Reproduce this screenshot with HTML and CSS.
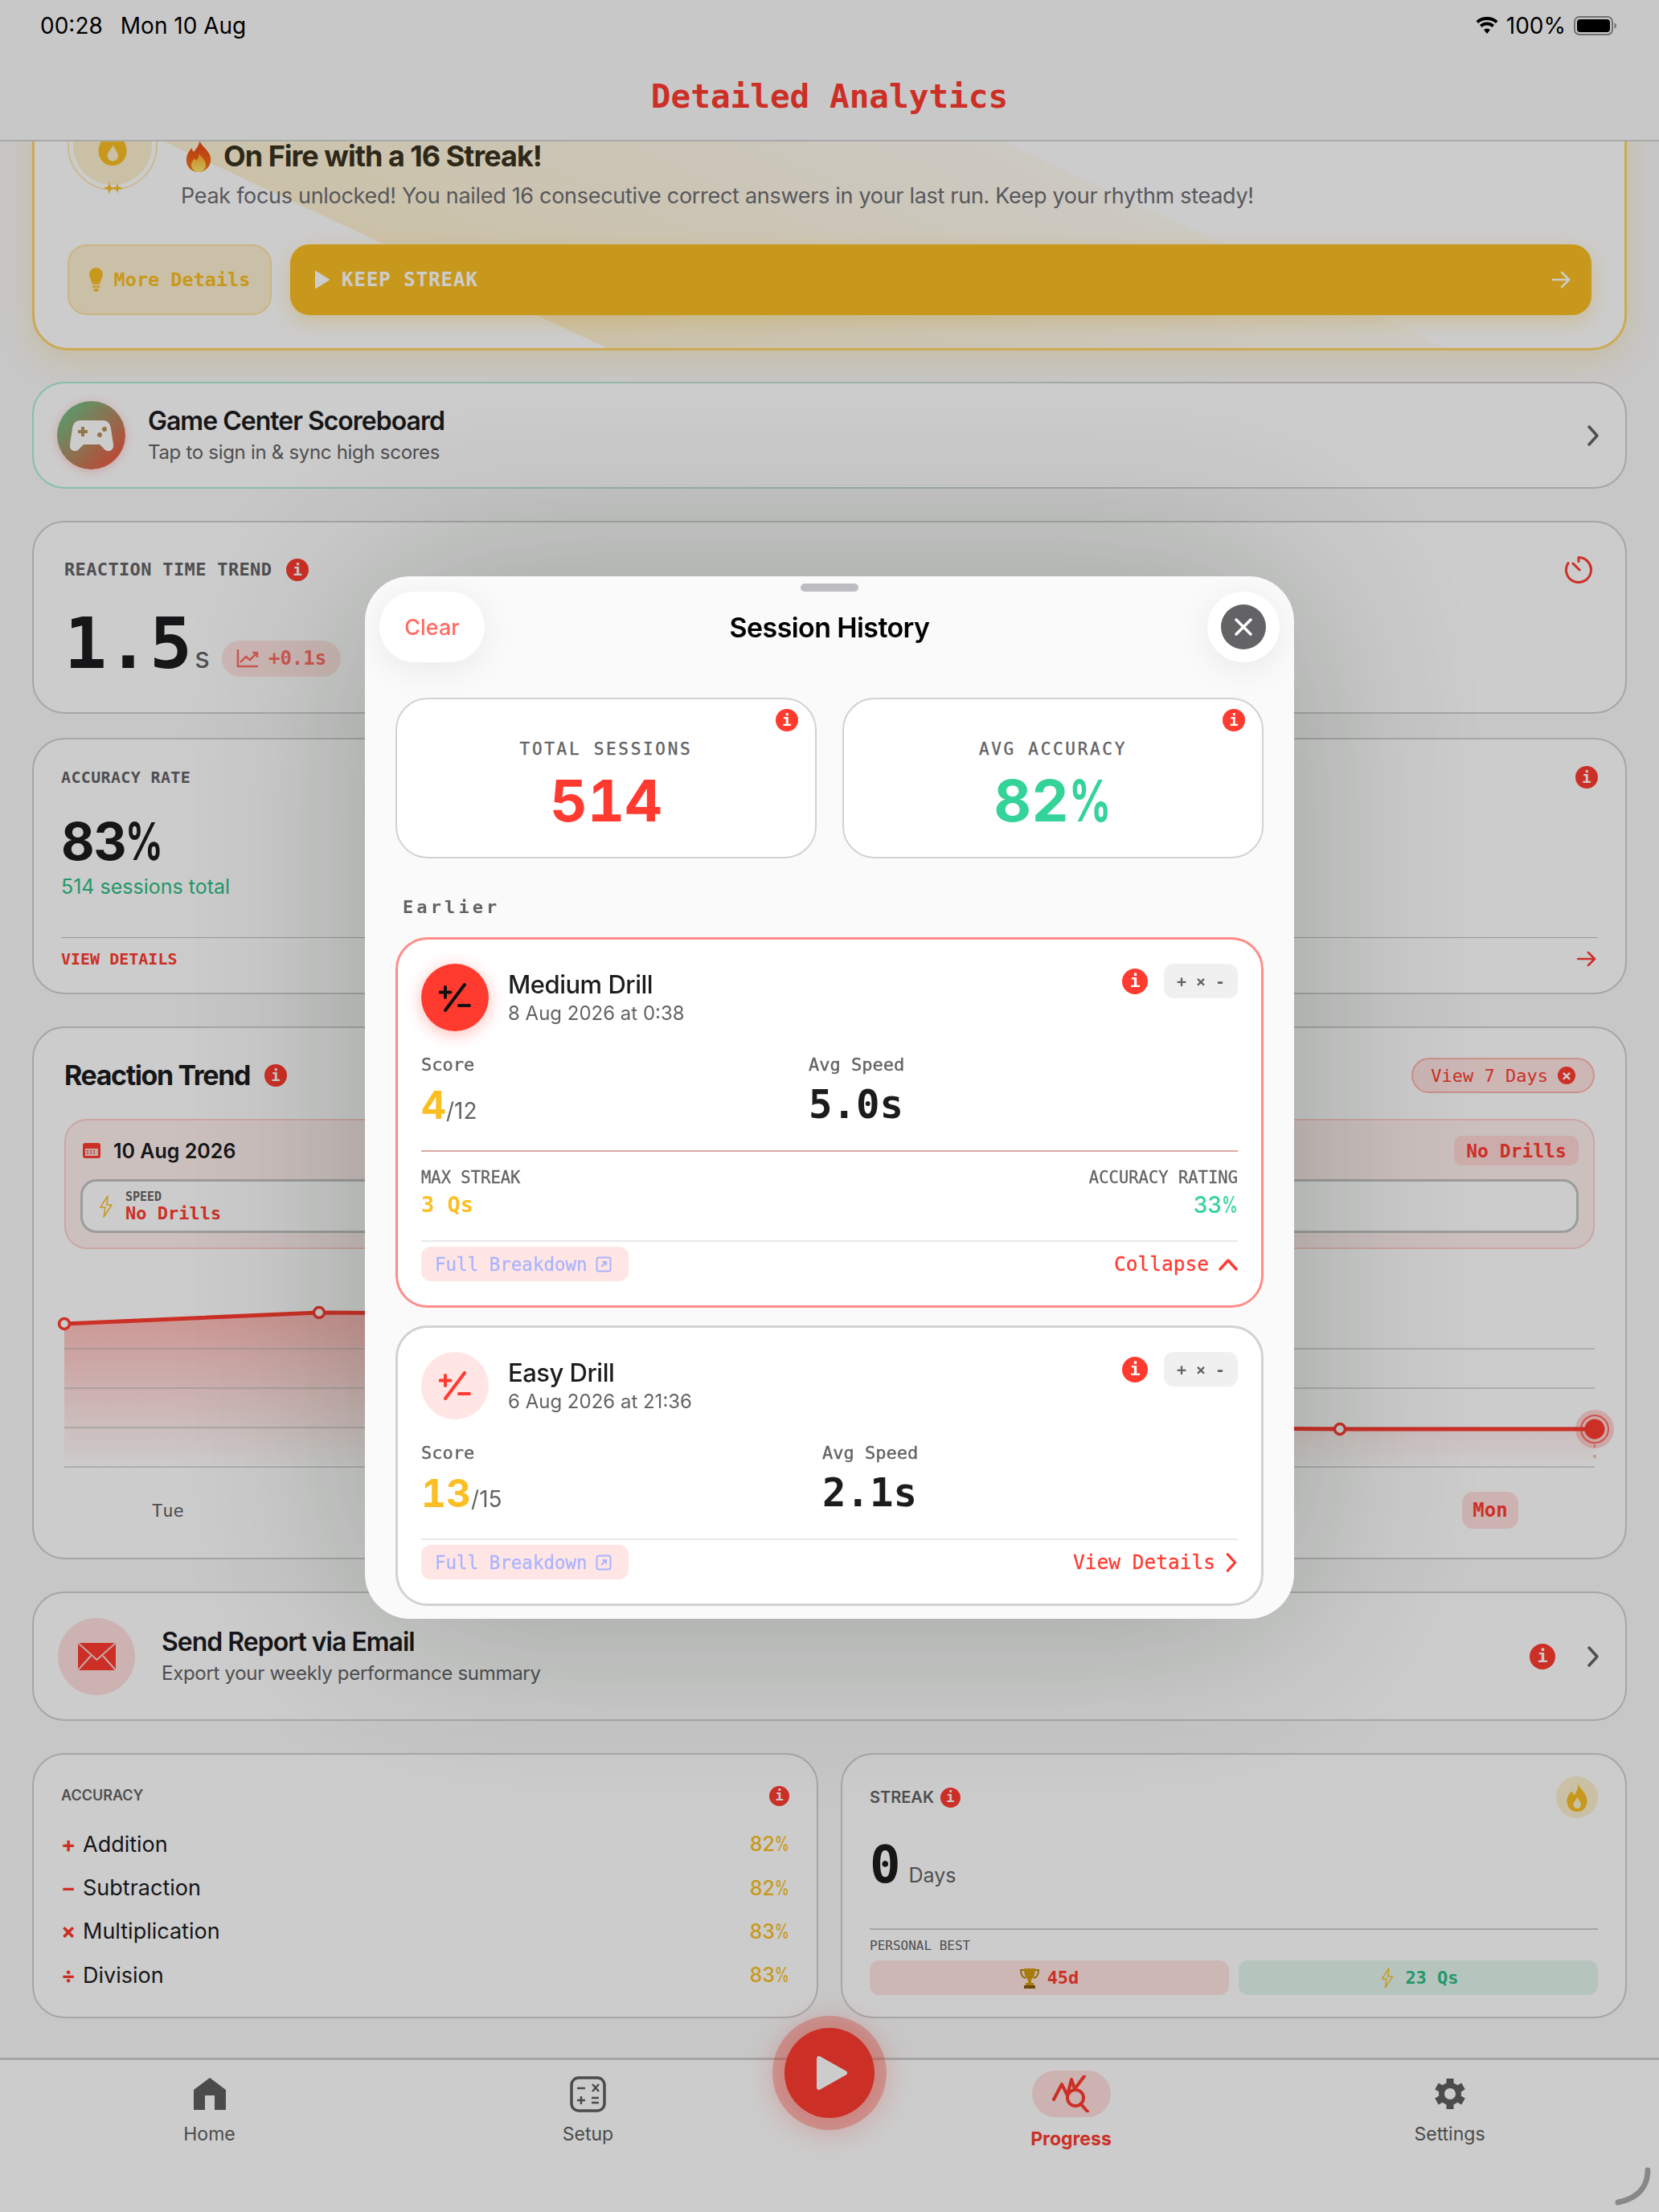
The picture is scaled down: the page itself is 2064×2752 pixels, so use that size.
FILE: index.html
```html
<!DOCTYPE html>
<html lang="en">
<head>
    <meta charset="UTF-8">
    <meta name="viewport" content="width=device-width, initial-scale=1.0">
    <title>Detailed Analytics</title>
    <link rel="stylesheet" href="styles.css">
</head>
<body>
    <svg class="sprite" width="0" height="0" aria-hidden="true">
        <defs>
            <symbol id="flame" viewBox="0 0 24 28">
                <path fill-rule="evenodd" d="M13 0c1 5 9 9 9 17.500C22 23.500 17.500 28 12 28S2 23.500 2 17.500C2 13 4.500 10.500 6 7.500c1.500 1 2.500 2.500 3 4C11.500 8.500 13.500 5 13 0zM12.500 13c-.5 3-4 4.500-4 8 0 2.200 1.600 3.800 3.700 3.800S16 23.200 16 21c0-3-3-4.500-3.500-8z"/>
            </symbol>
            <symbol id="plus-minus" viewBox="0 0 40 36">
                <path fill="none" stroke="currentColor" stroke-width="4" stroke-linecap="round" d="M32 2 8 34M8 5v13M1.500 11.500h13M25 28h13"/>
            </symbol>
            <symbol id="open-box" viewBox="0 0 20 20">
                <path fill="none" stroke="currentColor" stroke-width="2" d="M4 1.500h12A2.500 2.500 0 0 1 18.500 4v12a2.500 2.500 0 0 1-2.500 2.500H4A2.500 2.500 0 0 1 1.500 16V4A2.500 2.500 0 0 1 4 1.500zM7 13l6-6M8.500 7H13v4.500"/>
            </symbol>
            <symbol id="chevron" viewBox="0 0 16 28">
                <path fill="none" stroke="currentColor" stroke-width="3.500" stroke-linecap="round" stroke-linejoin="round" d="M3 3l10 11L3 25"/>
            </symbol>
            <symbol id="bolt" viewBox="0 0 18 28">
                <path fill="none" stroke="currentColor" stroke-width="1.500" stroke-linejoin="round" d="M11 1 2 15h6L6 27l10-15h-6z"/>
            </symbol>
        </defs>
    </svg>

    <div class="app">
        <header class="top-bar">
            <div class="status-bar">
                <div class="status-left"><span>00:28</span><span>Mon 10 Aug</span></div>
                <div class="status-right">
                    <svg class="wifi" viewBox="0 0 28 22"><path d="M14 21l-4-5a6 6 0 0 1 8 0zM7.500 13 5 10a13.500 13.500 0 0 1 18 0l-2.500 3a10 10 0 0 0-13 0zM3 8 .5 5a20.500 20.500 0 0 1 27 0L25 8A17 17 0 0 0 3 8z"/></svg>
                    <span>100%</span>
                    <svg class="battery" viewBox="0 0 54 24"><rect x="1" y="1" width="47" height="22" rx="6" fill="none" stroke="#8e8e8e" stroke-width="2"/><rect x="4" y="4" width="41" height="16" rx="4"/><path d="M50.500 8.500c2 .5 2.500 2 2.500 3.500s-.5 3-2.500 3.500z" fill="#8e8e8e"/></svg>
                </div>
            </div>
            <h1 class="page-title">Detailed Analytics</h1>
        </header>

        <main class="scroll-area">
            <section class="hero-card">
                <div class="hero-top">
                    <div class="medal">
                        <svg class="medal-flame"><use href="#flame"/></svg>
                        <svg class="medal-stars" viewBox="0 0 26 16"><path d="M8 0l1.500 6L15 8l-5.500 2L8 16l-1.500-6L1 8l5.500-2zM18 1l1.300 5.300L25 8l-5.700 1.700L18 15l-1.300-5.300L11 8l5.700-1.700z"/></svg>
                    </div>
                    <div class="hero-text">
                        <h2 class="hero-title">
                            <svg class="fire-emoji" viewBox="0 0 34 40">
                                <defs>
                                    <linearGradient id="fireOuter" x1="0" y1="0" x2="0" y2="1"><stop offset="0" stop-color="#e8401c"/><stop offset="1" stop-color="#f57c12"/></linearGradient>
                                    <linearGradient id="fireInner" x1="0" y1="0" x2="0" y2="1"><stop offset="0" stop-color="#ffa51e"/><stop offset="1" stop-color="#ffe873"/></linearGradient>
                                </defs>
                                <path fill="url(#fireOuter)" d="M18 0c1 7 12 12 14 22 1.500 10-6 18-15 18S1 33 2 23c.500-6 4-9 6-13 1 2 2 4 3 5 3-4 8-9 7-15z"/>
                                <path fill="url(#fireInner)" d="M18 16c0 4 8 8 8 15 0 5-4 9-9 9s-9-4-9-9c0-4 3-6 4-8 1 1 2 2 2 3 2-2 4-6 4-10z"/>
                            </svg>
                            <span>On Fire with a 16 Streak!</span>
                        </h2>
                        <p class="hero-desc">Peak focus unlocked! You nailed 16 consecutive correct answers in your last run. Keep your rhythm steady!</p>
                    </div>
                </div>
                <div class="hero-actions">
                    <button class="btn-details">
                        <svg class="bulb" viewBox="0 0 18 32"><path d="M9 0a9 9 0 0 1 9 9c0 4-3 7-4 13H4C3 16 0 13 0 9a9 9 0 0 1 9-9zM4 24h10v2.500H4zM5.500 28h7v1.500L10.500 32h-3l-2-2.500z"/></svg>
                        More Details
                    </button>
                    <button class="btn-keep">
                        <svg class="btn-play" viewBox="0 0 20 24"><path d="M2 2l16 10L2 22z" stroke="currentColor" stroke-width="2" stroke-linejoin="round"/></svg>
                        <span class="btn-keep-label">KEEP STREAK</span>
                        <svg class="btn-arrow" viewBox="0 0 24 24"><path d="M2 12h19M13 3l9 9-9 9" fill="none" stroke="currentColor" stroke-width="2.500" stroke-linecap="round" stroke-linejoin="round"/></svg>
                    </button>
                </div>
            </section>

            <section class="link-card game-card">
                <div class="game-icon">
                    <svg viewBox="0 0 56 44"><path fill="#fff" d="M14 3h28c6 0 9 4 10 10l3 20c1 7-6 11-11 6l-6-6H18l-6 6c-5 5-12 1-11-6l3-20C5 7 8 3 14 3z"/><path fill="none" stroke="#b8945c" stroke-width="4" d="M17 11v12M11 17h12"/><circle cx="38" cy="21" r="3" fill="#b8945c"/><circle cx="44" cy="14" r="3" fill="#b8945c"/></svg>
                </div>
                <div class="link-text">
                    <div class="link-title">Game Center Scoreboard</div>
                    <div class="link-sub">Tap to sign in &amp; sync high scores</div>
                </div>
                <svg class="chevron"><use href="#chevron"/></svg>
            </section>

            <div class="metric-stack">
                <section class="card reaction-card">
                    <div class="card-row">
                        <div class="label-with-info">
                            <span class="mono-label">REACTION TIME TREND</span>
                            <span class="info">i</span>
                        </div>
                        <svg class="timer" viewBox="0 0 36 36"><path fill="none" stroke="currentColor" stroke-width="3" stroke-linecap="round" d="M18 2.500A15.500 15.500 0 1 1 5 9.500M18 2.500v5M11 10l8 8"/></svg>
                    </div>
                    <div class="reaction-value">
                        <span class="big-number">1.5</span>
                        <span class="big-unit">s</span>
                        <span class="trend-pill">
                            <svg viewBox="0 0 28 24"><path fill="none" stroke="currentColor" stroke-width="2.500" d="M2 1v21h25M5 17l7-7 5 4 8-8M20 5h6v6"/></svg>
                            +0.1s
                        </span>
                    </div>
                </section>

                <section class="card accuracy-card">
                    <div class="card-row">
                        <span class="mono-label mono-label-small">ACCURACY RATE</span>
                        <span class="info">i</span>
                    </div>
                    <div class="accuracy-value">83<span class="pct">%</span></div>
                    <div class="accuracy-sub">514 sessions total</div>
                    <div class="accuracy-footer">
                        <span>VIEW DETAILS</span>
                        <svg viewBox="0 0 24 20"><path d="M1 10h21M14 2l8 8-8 8" fill="none" stroke="currentColor" stroke-width="2.500" stroke-linecap="round" stroke-linejoin="round"/></svg>
                    </div>
                </section>
            </div>

            <section class="card trend-card">
                <div class="card-row">
                    <div class="label-with-info">
                        <h2 class="trend-title">Reaction Trend</h2>
                        <span class="info">i</span>
                    </div>
                    <span class="days-pill">View 7 Days <span class="pill-x">×</span></span>
                </div>
                <div class="day-panel">
                    <div class="day-row">
                        <div class="day-date">
                            <svg viewBox="0 0 22 19"><rect width="22" height="19" rx="3"/><path d="M3 7h16v9H3z" fill="#f3d6d4"/><path d="M5 9h2v1.500H5zM9 9h2v1.500H9zM13 9h2v1.500h-2zM5 12h2v1.500H5zM9 12h2v1.500H9zM13 12h2v1.500h-2z"/></svg>
                            <span>10 Aug 2026</span>
                        </div>
                        <span class="no-drills-chip">No Drills</span>
                    </div>
                    <div class="day-box">
                        <svg class="bolt-icon"><use href="#bolt"/></svg>
                        <div>
                            <div class="day-box-label">SPEED</div>
                            <div class="day-box-value">No Drills</div>
                        </div>
                    </div>
                </div>
                <svg class="trend-chart" viewBox="0 0 1904 205" width="1904" height="205">
                    <defs>
                        <linearGradient id="areaFill" gradientUnits="userSpaceOnUse" x1="0" y1="0" x2="0" y2="200">
                            <stop offset="0" stop-color="#ff3b30" stop-opacity=".36"/>
                            <stop offset="1" stop-color="#ff3b30" stop-opacity="0"/>
                        </linearGradient>
                    </defs>
                    <path d="M0 22 317 8 635 10 952 90 1269 150 1587 153 1904 153V200H0z" fill="url(#areaFill)"/>
                    <path d="M0 53h1904M0 102h1904M0 151h1904M0 200h1904" stroke="#b4b4b4" stroke-width="1"/>
                    <path d="M1904 172v20" stroke="#ff3b30" stroke-opacity=".4" stroke-width="3" stroke-dasharray="4 9"/>
                    <path d="M0 22 317 8 635 10 952 90 1269 150 1587 153 1904 153" fill="none" stroke="#ff3b30" stroke-width="5"/>
                    <g fill="#fff" stroke="#ff3b30" stroke-width="3.500">
                        <circle cx="0" cy="22" r="6.500"/><circle cx="317" cy="8" r="6.500"/><circle cx="635" cy="10" r="6.500"/>
                        <circle cx="952" cy="90" r="6.500"/><circle cx="1269" cy="150" r="6.500"/><circle cx="1587" cy="153" r="6.500"/>
                    </g>
                    <circle cx="1904" cy="153" r="24" fill="#ff3b30" fill-opacity=".22"/>
                    <circle cx="1904" cy="153" r="17" fill="none" stroke="#ff3b30" stroke-opacity=".7" stroke-width="2"/>
                    <circle cx="1904" cy="153" r="12.500" fill="#ff3b30"/>
                </svg>
                <div class="chart-days">
                    <span>Tue</span><span class="day-today">Mon</span>
                </div>
            </section>

            <section class="link-card email-card">
                <div class="email-icon">
                    <svg viewBox="0 0 47 34"><rect width="47" height="34" fill="#ff3b30"/><path d="M0 0l23.500 21L47 0M0 34l16-18M47 34 31 16" fill="none" stroke="#f6d8d6" stroke-width="2"/></svg>
                </div>
                <div class="link-text">
                    <div class="link-title">Send Report via Email</div>
                    <div class="link-sub">Export your weekly performance summary</div>
                </div>
                <span class="info info-large">i</span>
                <svg class="chevron email-chevron"><use href="#chevron"/></svg>
            </section>

            <div class="bottom-grid">
                <section class="card breakdown-card">
                    <div class="card-row">
                        <span class="small-head small-head-narrow">ACCURACY</span>
                        <span class="info info-small">i</span>
                    </div>
                    <ul class="op-list">
                        <li><span class="op-symbol">+</span><span class="op-name">Addition</span><span class="op-value">82<span class="pct">%</span></span></li>
                        <li><span class="op-symbol">−</span><span class="op-name">Subtraction</span><span class="op-value">82<span class="pct">%</span></span></li>
                        <li><span class="op-symbol">×</span><span class="op-name">Multiplication</span><span class="op-value">83<span class="pct">%</span></span></li>
                        <li><span class="op-symbol">÷</span><span class="op-name">Division</span><span class="op-value">83<span class="pct">%</span></span></li>
                    </ul>
                </section>

                <section class="card streak-card">
                    <div class="card-row">
                        <div class="label-with-info streak-label">
                            <span class="small-head">STREAK</span>
                            <span class="info info-small">i</span>
                        </div>
                        <div class="streak-flame"><svg><use href="#flame"/></svg></div>
                    </div>
                    <div class="streak-value"><span class="streak-number">0</span><span class="streak-unit">Days</span></div>
                    <div class="personal-best">PERSONAL BEST</div>
                    <div class="best-row">
                        <div class="best-pill best-days">
                            <svg viewBox="0 0 24 26"><path fill="none" stroke="#b8860b" stroke-width="2" d="M6 3H1c0 6 2 9 6 10M18 3h5c0 6-2 9-6 10"/><path fill="#d29a12" d="M5 1h14c0 8-2 12-5 14v4h3v3H7v-3h3v-4C7 13 5 9 5 1z"/><path fill="#8a5a10" d="M5 22h14v4H5z"/></svg>
                            45d
                        </div>
                        <div class="best-pill best-speed">
                            <svg class="best-bolt"><use href="#bolt"/></svg>
                            23 Qs
                        </div>
                    </div>
                </section>
            </div>
        </main>

        <nav class="tab-bar">
            <div class="tab">
                <div class="tab-icon"><svg class="home-icon" viewBox="0 0 40 40"><path d="M20 0 40 15V40H26V22H14V40H0V15z"/></svg></div>
                <span class="tab-label">Home</span>
            </div>
            <div class="tab">
                <div class="tab-icon">
                    <svg class="setup-icon" viewBox="0 0 45 45"><rect x="2" y="2" width="41" height="41" rx="9" fill="none" stroke="currentColor" stroke-width="3.500"/><path d="M9 15h10M28 10l8 9M36 10l-8 9M9 30h10M14 25v10M27 27h9M27 33h9" fill="none" stroke="currentColor" stroke-width="2.500"/></svg>
                </div>
                <span class="tab-label">Setup</span>
            </div>
            <button class="play-button">
                <svg viewBox="0 0 40 44"><path d="M4 4l32 18L4 40z" fill="#fff" stroke="#fff" stroke-width="6" stroke-linejoin="round"/></svg>
            </button>
            <div class="tab tab-active">
                <div class="tab-icon">
                    <svg class="progress-icon" viewBox="0 0 47 46"><path d="M2 30 12 11l7 14 5-20 4 12L40 1" fill="none" stroke="currentColor" stroke-width="4" stroke-linejoin="round" stroke-linecap="round"/><circle cx="29" cy="28" r="10" fill="none" stroke="currentColor" stroke-width="4"/><path d="M36 36l8 9" stroke="currentColor" stroke-width="4" stroke-linecap="round"/></svg>
                </div>
                <span class="tab-label">Progress</span>
            </div>
            <div class="tab">
                <div class="tab-icon">
                    <svg class="gear-icon" viewBox="0 0 40 40"><g stroke="currentColor" stroke-width="9"><path d="M20 1v38M3.500 10.500l33 19M3.500 29.500l33-19"/></g><circle cx="20" cy="20" r="14" fill="currentColor"/><circle cx="20" cy="20" r="7" fill="#fff"/></svg>
                </div>
                <span class="tab-label">Settings</span>
            </div>
            <svg class="corner-grip" viewBox="0 0 46 48"><path d="M42 4c0 16-8 34-37 40" fill="none" stroke="#aaa" stroke-width="7" stroke-linecap="round"/></svg>
        </nav>
    </div>

    <div class="overlay">
        <div class="sheet">
            <div class="sheet-handle"></div>
            <div class="sheet-header">
                <button class="clear-button">Clear</button>
                <h2 class="sheet-title">Session History</h2>
                <button class="close-button">
                    <span class="close-dot"><svg viewBox="0 0 24 24"><path d="M3 3l18 18M21 3 3 21" stroke="#fff" stroke-width="3.500" stroke-linecap="round"/></svg></span>
                </button>
            </div>

            <div class="summary-grid">
                <div class="summary-card">
                    <span class="info summary-info">i</span>
                    <div class="summary-label">TOTAL SESSIONS</div>
                    <div class="summary-value summary-red">514</div>
                </div>
                <div class="summary-card">
                    <span class="info summary-info">i</span>
                    <div class="summary-label">AVG ACCURACY</div>
                    <div class="summary-value summary-green">82<span class="pct">%</span></div>
                </div>
            </div>

            <div class="section-label">Earlier</div>

            <div class="drill-list">
                <article class="drill-card drill-open">
                    <div class="drill-head">
                        <div class="drill-icon drill-icon-solid"><svg><use href="#plus-minus"/></svg></div>
                        <div>
                            <div class="drill-name">Medium Drill</div>
                            <div class="drill-date">8 Aug 2026 at 0:38</div>
                        </div>
                        <div class="drill-tags">
                            <span class="info info-large">i</span>
                            <span class="ops-chip">+ × -</span>
                        </div>
                    </div>
                    <div class="drill-stats stats-medium">
                        <div>
                            <div class="stat-label">Score</div>
                            <div class="score-value"><span class="score-main">4</span><span class="score-total">/12</span></div>
                        </div>
                        <div>
                            <div class="stat-label">Avg Speed</div>
                            <div class="speed-value">5.0s</div>
                        </div>
                    </div>
                    <div class="drill-divider-red"></div>
                    <div class="drill-extra">
                        <div>
                            <div class="extra-label">MAX STREAK</div>
                            <div class="extra-streak">3 Qs</div>
                        </div>
                        <div class="extra-right">
                            <div class="extra-label">ACCURACY RATING</div>
                            <div class="extra-accuracy">33<span class="pct">%</span></div>
                        </div>
                    </div>
                    <div class="drill-divider"></div>
                    <div class="drill-footer">
                        <button class="breakdown-button">Full Breakdown <svg><use href="#open-box"/></svg></button>
                        <span class="drill-link">Collapse <svg class="chevron-up" viewBox="0 0 24 16"><path d="M2 14 12 3l10 11" fill="none" stroke="currentColor" stroke-width="3.500" stroke-linecap="round" stroke-linejoin="round"/></svg></span>
                    </div>
                </article>

                <article class="drill-card">
                    <div class="drill-head">
                        <div class="drill-icon"><svg><use href="#plus-minus"/></svg></div>
                        <div>
                            <div class="drill-name">Easy Drill</div>
                            <div class="drill-date">6 Aug 2026 at 21:36</div>
                        </div>
                        <div class="drill-tags">
                            <span class="info info-large">i</span>
                            <span class="ops-chip">+ × -</span>
                        </div>
                    </div>
                    <div class="drill-stats stats-easy">
                        <div>
                            <div class="stat-label">Score</div>
                            <div class="score-value"><span class="score-main">13</span><span class="score-total">/15</span></div>
                        </div>
                        <div>
                            <div class="stat-label">Avg Speed</div>
                            <div class="speed-value">2.1s</div>
                        </div>
                    </div>
                    <div class="drill-divider"></div>
                    <div class="drill-footer">
                        <button class="breakdown-button">Full Breakdown <svg><use href="#open-box"/></svg></button>
                        <span class="drill-link">View Details <svg class="chevron-right"><use href="#chevron"/></svg></span>
                    </div>
                </article>
            </div>
        </div>
    </div>
</body>
</html>
```

FILE: styles.css
```css
* {
    margin: 0;
    padding: 0;
    box-sizing: border-box;
}

body {
    font-family: 'Inter', 'Noto Sans', sans-serif;
    background: #f9f9f9;
    color: #1c1c1e;
}

button {
    font: inherit;
    border: none;
    background: none;
}

.sprite {
    position: absolute;
}

.pct {
    display: inline-block;
    margin-right: -0.27em;
    transform: scaleX(0.72);
    transform-origin: left center;
}

.app {
    height: 2752px;
    display: flex;
    flex-direction: column;
    overflow: hidden;
}

/* top bar */
.top-bar {
    height: 176px;
    flex: none;
    background: #fbfbfb;
    border-bottom: 2px solid #d4d4d4;
    text-align: center;
}

.status-bar {
    height: 64px;
    padding: 0 52px 0 50px;
    display: flex;
    justify-content: space-between;
    align-items: center;
    font-size: 28px;
    color: #000;
}

.status-left {
    display: flex;
    gap: 22px;
}

.status-right {
    display: flex;
    align-items: center;
    gap: 10px;
}

.wifi {
    width: 28px;
    height: 22px;
}

.battery {
    width: 54px;
    height: 24px;
}

.page-title {
    margin-top: 31px;
    font-family: 'DejaVu Sans Mono', monospace;
    font-size: 41px;
    line-height: 50px;
    font-weight: 700;
    color: #ff3b30;
}

/* scrolling content */
.scroll-area {
    flex: 1;
    overflow: hidden;
    padding: 0 40px;
    display: flex;
    flex-direction: column;
    gap: 40px;
}

.card {
    background: #fff;
    border: 2px solid #d0d0d0;
    border-radius: 40px;
}

.card-row {
    display: flex;
    justify-content: space-between;
    align-items: center;
}

.info {
    display: inline-flex;
    justify-content: center;
    align-items: center;
    flex: none;
    width: 28px;
    height: 28px;
    border-radius: 50%;
    background: #ff3b30;
    color: #fff;
    font-family: 'DejaVu Sans Mono', monospace;
    font-size: 19px;
    font-weight: 700;
}

.info-large {
    width: 32px;
    height: 32px;
    font-size: 22px;
}

.info-small {
    width: 25px;
    height: 25px;
    font-size: 17px;
}

.label-with-info {
    display: flex;
    align-items: center;
    gap: 18px;
}

.mono-label {
    font-family: 'DejaVu Sans Mono', monospace;
    font-size: 22px;
    line-height: 30px;
    font-weight: 700;
    letter-spacing: 0.350px;
    color: #636366;
}

.mono-label-small {
    font-size: 20px;
    line-height: 26px;
}

/* hero */
.hero-card {
    flex: none;
    margin-top: -96px;
    height: 356px;
    padding: 42px 41px 0;
    border: 3px solid #ffd469;
    border-radius: 44px;
    background: linear-gradient(25deg, transparent 301px, rgba(251, 191, 36, 0.2) 301px, rgba(251, 191, 36, 0.05) 742px, transparent 742px), #fff;
    box-shadow: 0 12px 40px rgba(251, 191, 36, 0.22);
}

.hero-top {
    display: flex;
    gap: 29px;
    height: 136px;
}

.medal {
    position: relative;
    width: 112px;
    height: 112px;
    flex: none;
    border-radius: 50%;
    border: 2px solid #fbe8b4;
    display: flex;
    justify-content: center;
    align-items: center;
}

.medal::before {
    content: "";
    position: absolute;
    inset: 5px;
    border-radius: 50%;
    background: #fdf0cf;
}

.medal-flame {
    position: relative;
    width: 42px;
    height: 49px;
    fill: #fbbf24;
}

.medal-stars {
    position: absolute;
    left: 42px;
    bottom: -7px;
    width: 26px;
    height: 16px;
    fill: #fbbf24;
}

.hero-text {
    padding-top: 51px;
}

.hero-title {
    display: flex;
    align-items: center;
    gap: 14px;
    padding-left: 5px;
    font-size: 36px;
    line-height: 36px;
    font-weight: 700;
    letter-spacing: -1px;
    color: #3a3320;
}

.fire-emoji {
    width: 34px;
    height: 40px;
    margin: -2px 0;
}

.hero-desc {
    margin-top: 12px;
    font-size: 27px;
    line-height: 40px;
    color: #6e6e73;
    letter-spacing: -0.300px;
    white-space: nowrap;
}

.hero-actions {
    display: flex;
    gap: 23px;
    margin-top: 43px;
}

.btn-details {
    width: 254px;
    height: 88px;
    display: flex;
    justify-content: center;
    align-items: center;
    gap: 14px;
    border: 2px solid #fce3a4;
    border-radius: 24px;
    background: #fdf1d2;
    color: #fbbf24;
    font-family: 'DejaVu Sans Mono', monospace;
    font-size: 23.500px;
    font-weight: 700;
}

.bulb {
    width: 17px;
    height: 30px;
    fill: currentColor;
}

.btn-keep {
    flex: 1;
    height: 88px;
    padding: 0 26px 0 30px;
    display: flex;
    align-items: center;
    border-radius: 24px;
    background: #fbbf24;
    color: #fff;
    font-family: 'DejaVu Sans Mono', monospace;
    font-size: 24px;
    font-weight: 700;
    letter-spacing: 1px;
    box-shadow: 0 8px 24px rgba(251, 191, 36, 0.3);
}

.btn-play {
    width: 20px;
    height: 24px;
    fill: currentColor;
}

.btn-keep-label {
    margin-left: 14px;
}

.btn-arrow {
    margin-left: auto;
    width: 24px;
    height: 24px;
}

/* link cards */
.link-card {
    flex: none;
    display: flex;
    align-items: center;
    border-radius: 40px;
    border: 2px solid #d0d0d0;
    background: #fff;
}

.game-card {
    height: 133px;
    margin-top: -1px;
    padding: 0 32px 0 29px;
    gap: 28px;
    border-color: transparent;
    background: linear-gradient(#fff, #fff) padding-box, linear-gradient(90deg, #a8f0d2, #d0d0d0 75%) border-box;
}

.game-icon {
    width: 85px;
    height: 85px;
    border-radius: 50%;
    display: flex;
    justify-content: center;
    align-items: center;
    background: linear-gradient(135deg, #5fd08f, #ff4b3a);
    box-shadow: 0 2px 12px rgba(255, 59, 48, 0.25);
}

.game-icon svg {
    width: 56px;
    height: 44px;
}

.link-text {
    flex: 1;
}

.link-title {
    font-size: 32px;
    line-height: 40px;
    font-weight: 600;
    letter-spacing: -1px;
}

.link-sub {
    margin-top: 2px;
    font-size: 24px;
    line-height: 34px;
    letter-spacing: -0.300px;
    color: #636366;
}

.chevron {
    width: 16px;
    height: 28px;
    flex: none;
    color: #636366;
}

/* reaction + accuracy */
.metric-stack {
    display: flex;
    flex-direction: column;
    gap: 30px;
}

.reaction-card {
    height: 240px;
    padding: 41px 38px 0;
}

.timer {
    width: 36px;
    height: 36px;
    color: #ff3b30;
    margin-right: 2px;
}

.reaction-value {
    display: flex;
    align-items: baseline;
    margin-top: 30px;
}

.big-number {
    font-family: 'DejaVu Sans Mono', monospace;
    font-size: 88px;
    line-height: 88px;
    font-weight: 700;
}

.big-unit {
    margin-left: 3px;
    font-size: 36px;
    color: #636366;
}

.trend-pill {
    margin-left: 15px;
    height: 45px;
    padding: 0 18px;
    display: inline-flex;
    align-items: center;
    gap: 12px;
    border-radius: 23px;
    background: #ffe5e3;
    color: #ff6f66;
    font-family: 'DejaVu Sans Mono', monospace;
    font-size: 24px;
    font-weight: 700;
}

.trend-pill svg {
    width: 28px;
    height: 24px;
}

.accuracy-card {
    height: 319px;
    padding: 33px 34px 0;
}

.accuracy-value {
    width: fit-content;
    margin-top: 31px;
    font-size: 64px;
    line-height: 70px;
    font-weight: 700;
    letter-spacing: -1.500px;
}

.accuracy-sub {
    width: fit-content;
    margin-top: 6px;
    font-size: 25px;
    line-height: 30px;
    color: #2ebd85;
}

.accuracy-footer {
    margin-top: 48px;
    padding-top: 13px;
    border-top: 1px solid #bdbdbd;
    display: flex;
    justify-content: space-between;
    align-items: center;
    font-family: 'DejaVu Sans Mono', monospace;
    font-size: 20px;
    line-height: 26px;
    font-weight: 700;
    color: #ff3b30;
}

.accuracy-footer svg {
    width: 24px;
    height: 20px;
    margin-right: 2px;
}

/* reaction trend */
.trend-card {
    height: 663px;
    padding: 37px 38px 0;
}

.trend-title {
    font-size: 34px;
    line-height: 44px;
    font-weight: 700;
    letter-spacing: -1.400px;
}

.days-pill {
    height: 44px;
    padding: 0 22px;
    display: inline-flex;
    align-items: center;
    gap: 12px;
    border: 2px solid #ffb5b0;
    border-radius: 22px;
    background: #ffe5e3;
    color: #ff3b30;
    font-family: 'DejaVu Sans Mono', monospace;
    font-size: 22px;
}

.pill-x {
    width: 22px;
    height: 22px;
    border-radius: 50%;
    display: inline-flex;
    justify-content: center;
    align-items: center;
    background: #ff3b30;
    color: #fff;
    font-size: 20px;
    font-weight: 700;
}

.day-panel {
    margin-top: 32px;
    height: 162px;
    padding: 19px 18px 0;
    border: 2px solid #ffcfcb;
    border-radius: 28px;
    background: #fff0ef;
}

.day-row {
    display: flex;
    justify-content: space-between;
    align-items: center;
}

.day-date {
    display: flex;
    align-items: center;
    gap: 16px;
    padding-left: 3px;
    font-size: 25px;
    font-weight: 600;
}

.day-date svg {
    width: 22px;
    height: 19px;
    fill: #ff3b30;
}

.no-drills-chip {
    width: 155px;
    height: 37px;
    display: flex;
    justify-content: center;
    align-items: center;
    border-radius: 10px;
    background: #ffd8d5;
    color: #ff3b30;
    font-family: 'DejaVu Sans Mono', monospace;
    font-size: 23px;
    font-weight: 700;
}

.day-box {
    margin-top: 17px;
    height: 67px;
    padding-left: 20px;
    display: flex;
    align-items: center;
    gap: 15px;
    border: 3px solid #c4c4c4;
    border-radius: 20px;
    background: #fff;
}

.bolt-icon {
    width: 18px;
    height: 28px;
    color: #fbbf24;
}

.day-box-label {
    font-family: 'DejaVu Sans Mono', monospace;
    font-size: 15px;
    line-height: 18px;
    font-weight: 700;
    color: #636366;
}

.day-box-value {
    font-family: 'DejaVu Sans Mono', monospace;
    font-size: 22px;
    line-height: 24px;
    font-weight: 700;
    color: #ff3b30;
}

.trend-chart {
    display: block;
    margin-top: 71px;
    overflow: visible;
}

.chart-days {
    margin-top: 26px;
    height: 46px;
    padding: 0 95px 0 109px;
    display: flex;
    justify-content: space-between;
    align-items: center;
    font-family: 'DejaVu Sans Mono', monospace;
    font-size: 22px;
    color: #636366;
}

.day-today {
    width: 70px;
    height: 46px;
    display: flex;
    justify-content: center;
    align-items: center;
    border-radius: 14px;
    background: #ffe0de;
    color: #ff3b30;
    font-size: 24px;
    font-weight: 700;
}

/* email */
.email-card {
    height: 161px;
    padding: 0 32px 0 30px;
    gap: 33px;
}

.email-icon {
    width: 96px;
    height: 96px;
    border-radius: 50%;
    display: flex;
    justify-content: center;
    align-items: center;
    background: #ffe0de;
}

.email-icon svg {
    width: 47px;
    height: 34px;
}

.email-chevron {
    margin-left: 6px;
}

/* bottom cards */
.bottom-grid {
    display: grid;
    grid-template-columns: 1fr 1fr;
    gap: 28px;
}

.breakdown-card,
.streak-card {
    height: 330px;
}

.breakdown-card {
    padding: 38px 34px 0;
}

.small-head {
    font-size: 20px;
    line-height: 26px;
    font-weight: 600;
    color: #636366;
}

.small-head-narrow {
    font-size: 18px;
}

.op-list {
    margin-top: 20px;
    list-style: none;
}

.op-list li {
    height: 54.400px;
    display: flex;
    align-items: center;
    font-size: 27px;
}

.op-symbol {
    width: 27px;
    color: #ff3b30;
    font-weight: 700;
}

.op-name {
    flex: 1;
}

.op-value {
    color: #fbbf24;
    font-size: 25px;
    font-weight: 500;
}

.streak-card {
    padding: 27px 34px 0;
}

.streak-label {
    gap: 8px;
}

.streak-flame {
    width: 52px;
    height: 52px;
    border-radius: 50%;
    display: flex;
    justify-content: center;
    align-items: center;
    background: #fdf0cf;
}

.streak-flame svg {
    width: 30px;
    height: 35px;
    fill: #fbbf24;
}

.streak-value {
    margin-top: 23px;
    display: flex;
    align-items: baseline;
    gap: 10px;
    padding-bottom: 44px;
    border-bottom: 2px solid #cfcfcf;
}

.streak-number {
    font-family: 'DejaVu Sans Mono', monospace;
    font-size: 64px;
    line-height: 70px;
    font-weight: 700;
}

.streak-unit {
    font-size: 25px;
    color: #636366;
}

.personal-best {
    margin-top: 9px;
    font-family: 'DejaVu Sans Mono', monospace;
    font-size: 16px;
    line-height: 22px;
    color: #636366;
}

.best-row {
    margin-top: 7px;
    display: grid;
    grid-template-columns: 1fr 1fr;
    gap: 12px;
}

.best-pill {
    height: 43px;
    display: flex;
    justify-content: center;
    align-items: center;
    gap: 10px;
    border-radius: 12px;
    font-family: 'DejaVu Sans Mono', monospace;
    font-size: 22px;
    font-weight: 700;
}

.best-pill svg {
    width: 24px;
    height: 26px;
}

.best-days {
    background: #ffe5e3;
    color: #ff3b30;
}

.best-speed {
    background: #e4f5ee;
    color: #2ebd85;
}

.best-bolt {
    color: #fbbf24;
}

/* tab bar */
.tab-bar {
    position: relative;
    z-index: 1;
    height: 192px;
    flex: none;
    border-top: 3px solid #d0d0d0;
    background: #fff;
    display: grid;
    grid-template-columns: 521px 421px 180px 421px 521px;
    align-items: start;
}

.tab {
    padding-top: 13px;
    display: flex;
    flex-direction: column;
    align-items: center;
    color: #5e5e5e;
}

.tab-icon {
    height: 58px;
    display: flex;
    justify-content: center;
    align-items: center;
}

.tab-label {
    margin-top: 6px;
    font-size: 23px;
    line-height: 30px;
}

.home-icon {
    width: 40px;
    height: 40px;
    fill: currentColor;
}

.setup-icon {
    width: 45px;
    height: 45px;
}

.gear-icon {
    width: 40px;
    height: 40px;
}

.tab-active {
    color: #ff3b30;
}

.tab-active .tab-icon {
    width: 98px;
    border-radius: 29px;
    background: #ffe0de;
}

.tab-active .tab-label {
    margin-top: 12px;
    font-weight: 700;
}

.progress-icon {
    width: 47px;
    height: 46px;
}

.play-button {
    justify-self: center;
    margin-top: -40px;
    width: 112px;
    height: 112px;
    border-radius: 50%;
    background: #ff3b30;
    display: flex;
    justify-content: center;
    align-items: center;
    box-shadow: 0 0 0 15px rgba(255, 59, 48, 0.3), 0 4px 34px 14px rgba(255, 59, 48, 0.25);
}

.play-button svg {
    width: 40px;
    height: 44px;
    margin-left: 6px;
}

.corner-grip {
    position: absolute;
    right: 10px;
    bottom: 8px;
    width: 46px;
    height: 48px;
}

/* modal sheet */
.overlay {
    position: fixed;
    inset: 0;
    z-index: 10;
    padding-top: 717px;
    display: flex;
    justify-content: center;
    align-items: flex-start;
    background: rgba(0, 0, 0, 0.2);
}

.sheet {
    width: 1156px;
    padding-bottom: 16px;
    border-radius: 56px;
    background: #fafafa;
    box-shadow: 0 0 300px rgba(10, 30, 10, 0.26);
}

.sheet-handle {
    width: 72px;
    height: 10px;
    margin: 0 auto;
    position: relative;
    top: 9px;
    border-radius: 5px;
    background: #bcbcc1;
}

.sheet-header {
    margin-top: 9px;
    padding: 0 18px;
    display: grid;
    grid-template-columns: 1fr auto 1fr;
    align-items: center;
}

.clear-button {
    justify-self: start;
    width: 131px;
    height: 88px;
    border-radius: 44px;
    background: #fff;
    color: #ff6b63;
    font-size: 27px;
    font-weight: 500;
    box-shadow: 0 8px 40px rgba(0, 0, 0, 0.07);
}

.sheet-title {
    font-size: 34px;
    font-weight: 600;
    color: #000;
    letter-spacing: -0.600px;
}

.close-button {
    justify-self: end;
    width: 90px;
    height: 88px;
    border-radius: 50%;
    background: #fff;
    display: flex;
    justify-content: center;
    align-items: center;
    box-shadow: 0 8px 40px rgba(0, 0, 0, 0.07);
}

.close-dot {
    width: 56px;
    height: 56px;
    border-radius: 50%;
    background: #636366;
    display: flex;
    justify-content: center;
    align-items: center;
}

.close-dot svg {
    width: 24px;
    height: 24px;
}

.summary-grid {
    margin-top: 44px;
    padding: 0 38px;
    display: grid;
    grid-template-columns: 1fr 1fr;
    gap: 32px;
}

.summary-card {
    position: relative;
    height: 200px;
    padding-top: 49px;
    border: 2px solid #d2d2d2;
    border-radius: 40px;
    background: #fff;
    text-align: center;
}

.summary-info {
    position: absolute;
    top: 12px;
    right: 21px;
}

.summary-label {
    font-family: 'DejaVu Sans Mono', monospace;
    font-size: 21px;
    line-height: 26px;
    letter-spacing: 2.700px;
    color: #636366;
    -webkit-text-stroke: 0.400px currentColor;
}

.summary-value {
    margin-top: 8px;
    font-size: 72px;
    line-height: 86px;
    font-weight: 700;
    font-variant-numeric: tabular-nums;
}

.summary-red {
    color: #ff3b30;
}

.summary-green {
    color: #34d399;
}

.section-label {
    margin-top: 46px;
    padding-left: 47px;
    font-family: 'DejaVu Sans Mono', monospace;
    font-size: 22px;
    line-height: 30px;
    font-weight: 700;
    letter-spacing: 4.100px;
    color: #636366;
}

.drill-list {
    margin-top: 22px;
    padding: 0 38px;
    display: flex;
    flex-direction: column;
    gap: 22px;
}

.drill-card {
    padding: 30px 29px;
    border: 3px solid #d2d2d2;
    border-radius: 40px;
    background: #fff;
}

.drill-open {
    border-color: #ff8d87;
}

.drill-head {
    display: flex;
    align-items: center;
    gap: 24px;
}

.drill-icon {
    width: 84px;
    height: 84px;
    flex: none;
    border-radius: 50%;
    display: flex;
    justify-content: center;
    align-items: center;
    background: #ffe5e3;
    color: #ff3b30;
}

.drill-icon svg {
    width: 40px;
    height: 36px;
}

.drill-icon-solid {
    background: #ff3b30;
    color: #111;
    box-shadow: 0 4px 20px rgba(255, 59, 48, 0.35);
}

.drill-name {
    font-size: 31px;
    line-height: 40px;
    font-weight: 500;
    letter-spacing: -0.500px;
}

.drill-date {
    font-size: 24px;
    line-height: 32px;
    color: #636366;
}

.drill-tags {
    margin-left: auto;
    align-self: flex-start;
    display: flex;
    align-items: center;
    gap: 20px;
}

.ops-chip {
    width: 92px;
    height: 43px;
    display: flex;
    justify-content: center;
    align-items: center;
    border-radius: 12px;
    background: #f0f0f0;
    color: #636366;
    font-family: 'DejaVu Sans Mono', monospace;
    font-size: 20px;
    font-weight: 700;
    white-space: pre;
}

.drill-stats {
    margin-top: 27px;
    display: grid;
}

.stats-medium {
    grid-template-columns: 482px 1fr;
}

.stats-easy {
    grid-template-columns: 499px 1fr;
}

.stat-label {
    font-family: 'DejaVu Sans Mono', monospace;
    font-size: 22px;
    line-height: 30px;
    color: #636366;
    -webkit-text-stroke: 0.400px currentColor;
}

.score-value {
    margin-top: 7px;
    height: 56px;
    display: flex;
    align-items: baseline;
}

.score-main {
    font-size: 48px;
    line-height: 56px;
    font-weight: 700;
    font-variant-numeric: tabular-nums;
    color: #fbbf24;
}

.score-total {
    font-size: 28px;
    color: #636366;
}

.speed-value {
    margin-top: 7px;
    font-family: 'DejaVu Sans Mono', monospace;
    font-size: 49px;
    line-height: 56px;
    font-weight: 700;
}

.drill-divider-red {
    margin-top: 28px;
    height: 2px;
    background: #dba8a5;
}

.drill-extra {
    margin-top: 19px;
    display: flex;
    justify-content: space-between;
}

.extra-right {
    text-align: right;
}

.extra-label {
    font-family: 'DejaVu Sans Mono', monospace;
    font-size: 20.500px;
    line-height: 26px;
    color: #636366;
    -webkit-text-stroke: 0.300px currentColor;
}

.extra-streak {
    margin-top: 3px;
    font-family: 'DejaVu Sans Mono', monospace;
    font-size: 27px;
    line-height: 36px;
    font-weight: 700;
    color: #fbbf24;
}

.extra-accuracy {
    margin-top: 3px;
    font-size: 28px;
    line-height: 36px;
    font-weight: 500;
    color: #34d399;
}

.drill-divider {
    margin-top: 28px;
    height: 2px;
    background: #e8e8e8;
}

.drill-extra + .drill-divider {
    margin-top: 26px;
}

.drill-footer {
    margin-top: 6px;
    display: flex;
    justify-content: space-between;
    align-items: center;
}

.breakdown-button {
    width: 258px;
    height: 43px;
    padding-left: 17px;
    display: flex;
    align-items: center;
    gap: 10px;
    border-radius: 12px;
    background: #ffe5e3;
    color: #a9b4ff;
    font-family: 'DejaVu Sans Mono', monospace;
    font-size: 22.500px;
    -webkit-text-stroke: 0.300px currentColor;
}

.breakdown-button svg {
    width: 20px;
    height: 20px;
}

.drill-link {
    display: flex;
    align-items: center;
    gap: 12px;
    color: #ff3b30;
    font-family: 'DejaVu Sans Mono', monospace;
    font-size: 24.500px;
    -webkit-text-stroke: 0.300px currentColor;
}

.chevron-up {
    width: 24px;
    height: 16px;
}

.chevron-right {
    width: 16px;
    height: 26px;
}
```
